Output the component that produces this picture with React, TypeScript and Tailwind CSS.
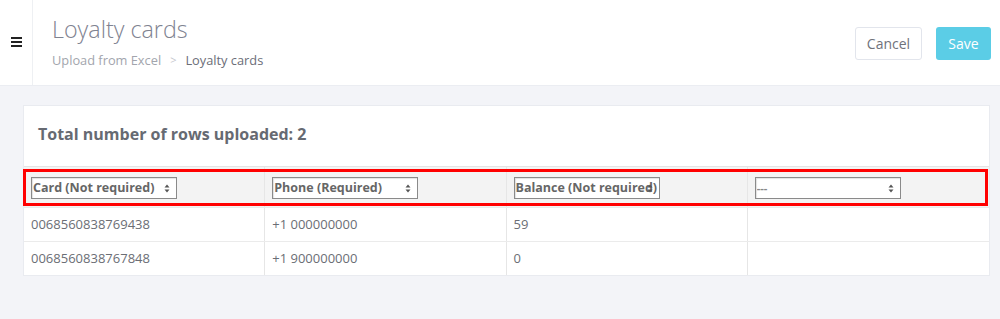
import { useState } from 'react';

const columns = ['Card (Not required)', 'Phone (Required)', 'Balance (Not required)', '---'];

const rows = [
  ['0068560838769438', '+1 000000000', '59', ''],
  ['0068560838767848', '+1 900000000', '0', ''],
];

const Arrows = () => (
  <svg width="6" height="9" viewBox="0 0 6 9" className="shrink-0">
    <path d="M3 0.5 L5.5 3.5 L0.5 3.5 Z" fill="#555" />
    <path d="M3 8.5 L5.5 5.5 L0.5 5.5 Z" fill="#555" />
  </svg>
);

const FakeSelect = ({ label }: { label: string }) => (
  <div className="relative flex h-[22px] w-[146px] items-center overflow-hidden border border-[#8a8a8a] bg-white pl-[1px] pr-[6px] shadow-[inset_1px_1px_1px_rgba(0,0,0,0.12)]">
    <span
      className={
        label === '---'
          ? 'flex-1 truncate text-[11px] font-bold text-[#888]'
          : 'flex-1 whitespace-nowrap text-[12.5px] font-bold text-[#666]'
      }
    >
      {label}
    </span>
    <span className="absolute right-[6px] top-[6px] z-10">
      <Arrows />
    </span>
  </div>
);

const App = () => {
  const [saved, setSaved] = useState(false);

  return (
    <div className="min-h-[319px] bg-[#f3f4f8] font-['Open_Sans',sans-serif]">
      <header className="flex h-[86px] border-b border-[#ebedf2] bg-white">
        <div className="flex w-[33px] shrink-0 items-center justify-center border-r border-[#eef0f3]">
          <div className="mt-[-2px] flex flex-col gap-[2px]">
            <span className="block h-[2px] w-[11px] bg-[#222]" />
            <span className="block h-[2px] w-[11px] bg-[#222]" />
            <span className="block h-[2px] w-[11px] bg-[#222]" />
          </div>
        </div>
        <div className="flex flex-1 items-start justify-between pl-[19px] pr-[9px]">
          <div className="pt-[13px]">
            <h1 className="text-[23.3px] leading-[32px] font-light text-[#7f8391]">Loyalty cards</h1>
            <div className="mt-[6px] flex items-center text-[12.8px] leading-[18px]">
              <span className="text-[#a2a5ad]">Upload from Excel</span>
              <span className="mx-[9px] text-[11px] text-[#c4c6cc]">&gt;</span>
              <span className="text-[#6b6e78]">Loyalty cards</span>
            </div>
          </div>
          <div className="flex items-center gap-[14px] pt-[27px]">
            <button className="h-[33px] w-[67px] rounded-[3px] border border-[#e2e5ec] bg-white text-[14px] text-[#6f727b]">
              Cancel
            </button>
            <button
              onClick={() => setSaved(!saved)}
              className="h-[33px] w-[55px] rounded-[3px] bg-[#5bcde6] text-[14px] text-white"
            >
              Save
            </button>
          </div>
        </div>
      </header>

      <div className="ml-[23px] mr-[10px] mt-[19px] border border-[#e9ebf0] bg-white">
        <div className="flex h-[60px] items-center pb-[5px] pl-[14px]">
          <h2 className="text-[16px] font-bold text-[#666a72]">Total number of rows uploaded: 2</h2>
        </div>
        <div className="relative">
          <div className="grid h-[41px] grid-cols-4 border-t border-[#e4e4e4] bg-[#f3f3f3]">
            {columns.map((c, i) => (
              <div
                key={c}
                className={
                  i < 3
                    ? 'flex items-center border-r border-[#e6e6e6] pl-[7px] pt-[2px]'
                    : 'flex items-center pl-[7px] pt-[2px]'
                }
              >
                <FakeSelect label={c} />
              </div>
            ))}
          </div>
          <div className="pointer-events-none absolute left-[-1px] right-[1px] top-[3px] h-[37px] border-[3px] border-[#ff0000]" />
        </div>
        {rows.map((r, ri) => (
          <div key={ri} className="grid h-[34px] grid-cols-4 border-t border-[#ebebeb]">
            {r.map((v, i) => (
              <div
                key={i}
                className={
                  i < 3
                    ? 'flex items-center border-r border-[#e6e6e6] pl-[7px] text-[13px] text-[#6b6e75]'
                    : 'flex items-center pl-[7px] text-[13px] text-[#6b6e75]'
                }
              >
                {v}
              </div>
            ))}
          </div>
        ))}
      </div>
    </div>
  );
};

export default App;
